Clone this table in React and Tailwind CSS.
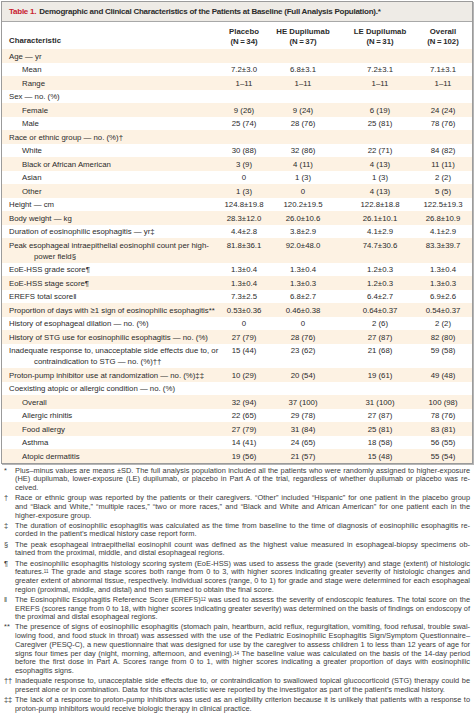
import React from 'react';

const rows = [
  { label: ['Age — yr'] },
  { label: ['Mean'], sub: true, v: ['7.2±3.0', '6.8±3.1', '7.2±3.1', '7.1±3.1'] },
  { label: ['Range'], sub: true, v: ['1–11', '1–11', '1–11', '1–11'] },
  { label: ['Sex — no. (%)'] },
  { label: ['Female'], sub: true, v: ['9 (26)', '9 (24)', '6 (19)', '24 (24)'] },
  { label: ['Male'], sub: true, v: ['25 (74)', '28 (76)', '25 (81)', '78 (76)'] },
  { label: ['Race or ethnic group — no. (%)†'] },
  { label: ['White'], sub: true, v: ['30 (88)', '32 (86)', '22 (71)', '84 (82)'] },
  { label: ['Black or African American'], sub: true, v: ['3 (9)', '4 (11)', '4 (13)', '11 (11)'] },
  { label: ['Asian'], sub: true, v: ['0', '1 (3)', '1 (3)', '2 (2)'] },
  { label: ['Other'], sub: true, v: ['1 (3)', '0', '4 (13)', '5 (5)'] },
  { label: ['Height — cm'], v: ['124.8±19.8', '120.2±19.5', '122.8±18.8', '122.5±19.3'] },
  { label: ['Body weight — kg'], v: ['28.3±12.0', '26.0±10.6', '26.1±10.1', '26.8±10.9'] },
  { label: ['Duration of eosinophilic esophagitis — yr‡'], v: ['4.4±2.8', '3.8±2.9', '4.1±2.9', '4.1±2.9'] },
  {
    label: ['Peak esophageal intraepithelial eosinophil count per high-', 'power field§'],
    v: ['81.8±36.1', '92.0±48.0', '74.7±30.6', '83.3±39.7'],
  },
  { label: ['EoE-HSS grade score¶'], v: ['1.3±0.4', '1.3±0.4', '1.2±0.3', '1.3±0.4'] },
  { label: ['EoE-HSS stage score¶'], v: ['1.3±0.4', '1.3±0.3', '1.2±0.3', '1.3±0.3'] },
  { label: ['EREFS total score‖'], v: ['7.3±2.5', '6.8±2.7', '6.4±2.7', '6.9±2.6'] },
  {
    label: ['Proportion of days with ≥1 sign of eosinophilic esophagitis**'],
    v: ['0.53±0.36', '0.46±0.38', '0.64±0.37', '0.54±0.37'],
  },
  { label: ['History of esophageal dilation — no. (%)'], v: ['0', '0', '2 (6)', '2 (2)'] },
  { label: ['History of STG use for eosinophilic esophagitis — no. (%)'], v: ['27 (79)', '28 (76)', '27 (87)', '82 (80)'] },
  {
    label: ['Inadequate response to, unacceptable side effects due to, or', 'contraindication to STG — no. (%)††'],
    v: ['15 (44)', '23 (62)', '21 (68)', '59 (58)'],
  },
  { label: ['Proton-pump inhibitor use at randomization — no. (%)‡‡'], v: ['10 (29)', '20 (54)', '19 (61)', '49 (48)'] },
  { label: ['Coexisting atopic or allergic condition — no. (%)'] },
  { label: ['Overall'], sub: true, v: ['32 (94)', '37 (100)', '31 (100)', '100 (98)'] },
  { label: ['Allergic rhinitis'], sub: true, v: ['22 (65)', '29 (78)', '27 (87)', '78 (76)'] },
  { label: ['Food allergy'], sub: true, v: ['27 (79)', '31 (84)', '25 (81)', '83 (81)'] },
  { label: ['Asthma'], sub: true, v: ['14 (41)', '24 (65)', '18 (58)', '56 (55)'] },
  { label: ['Atopic dermatitis'], sub: true, v: ['19 (56)', '21 (57)', '15 (48)', '55 (54)'] },
];

const heads = [
  ['Placebo', '(N\u2009=\u200934)'],
  ['HE Dupilumab', '(N\u2009=\u200937)'],
  ['LE Dupilumab', '(N\u2009=\u200931)'],
  ['Overall', '(N\u2009=\u2009102)'],
];

const notes = [
  {
    sym: '*',
    lines: [
      'Plus–minus values are means ±SD. The full analysis population included all the patients who were randomly assigned to higher-exposure',
      '(HE) dupilumab, lower-exposure (LE) dupilumab, or placebo in Part A of the trial, regardless of whether dupilumab or placebo was re-',
      'ceived.',
    ],
  },
  {
    sym: '†',
    lines: [
      'Race or ethnic group was reported by the patients or their caregivers. “Other” included “Hispanic” for one patient in the placebo group',
      'and “Black and White,” “multiple races,” “two or more races,” and “Black and White and African American” for one patient each in the',
      'higher-exposure group.',
    ],
  },
  {
    sym: '‡',
    lines: [
      'The duration of eosinophilic esophagitis was calculated as the time from baseline to the time of diagnosis of eosinophilic esophagitis re-',
      'corded in the patient’s medical history case report form.',
    ],
  },
  {
    sym: '§',
    lines: [
      'The peak esophageal intraepithelial eosinophil count was defined as the highest value measured in esophageal-biopsy specimens ob-',
      'tained from the proximal, middle, and distal esophageal regions.',
    ],
  },
  {
    sym: '¶',
    lines: [
      'The eosinophilic esophagitis histology scoring system (EoE-HSS) was used to assess the grade (severity) and stage (extent) of histologic',
      ['features.', '11', ' The grade and stage scores both range from 0 to 3, with higher scores indicating greater severity of histologic changes and'],
      'greater extent of abnormal tissue, respectively. Individual scores (range, 0 to 1) for grade and stage were determined for each esophageal',
      'region (proximal, middle, and distal) and then summed to obtain the final score.',
    ],
  },
  {
    sym: '‖',
    lines: [
      ['The Eosinophilic Esophagitis Reference Score (EREFS)', '12', ' was used to assess the severity of endoscopic features. The total score on the'],
      'EREFS (scores range from 0 to 18, with higher scores indicating greater severity) was determined on the basis of findings on endoscopy of',
      'the proximal and distal esophageal regions.',
    ],
  },
  {
    sym: '**',
    lines: [
      'The presence of signs of eosinophilic esophagitis (stomach pain, heartburn, acid reflux, regurgitation, vomiting, food refusal, trouble swal-',
      'lowing food, and food stuck in throat) was assessed with the use of the Pediatric Eosinophilic Esophagitis Sign/Symptom Questionnaire–',
      'Caregiver (PESQ-C), a new questionnaire that was designed for use by the caregiver to assess children 1 to less than 12 years of age for',
      ['signs four times per day (night, morning, afternoon, and evening).', '14', ' The baseline value was calculated on the basis of the 14-day period'],
      'before the first dose in Part A. Scores range from 0 to 1, with higher scores indicating a greater proportion of days with eosinophilic',
      'esophagitis signs.',
    ],
  },
  {
    sym: '††',
    lines: [
      'Inadequate response to, unacceptable side effects due to, or contraindication to swallowed topical glucocorticoid (STG) therapy could be',
      'present alone or in combination. Data for this characteristic were reported by the investigator as part of the patient’s medical history.',
    ],
  },
  {
    sym: '‡‡',
    lines: [
      'The lack of a response to proton-pump inhibitors was used as an eligibility criterion because it is unlikely that patients with a response to',
      'proton-pump inhibitors would receive biologic therapy in clinical practice.',
    ],
  },
];

const cols = 'grid grid-cols-[220px_44px_74px_80px_46px]';

function NoteLine({ line, last }) {
  const content = Array.isArray(line) ? (
    <>
      {line[0]}
      <sup className="text-[4.5px] relative -top-[1px]">{line[1]}</sup>
      {line[2]}
    </>
  ) : (
    line
  );
  return (
    <div
      className={
        last
          ? 'whitespace-nowrap'
          : 'whitespace-nowrap text-justify [text-align-last:justify]'
      }
    >
      {content}
    </div>
  );
}

export default function App() {
  return (
    <div className="w-[474px] min-h-[713px] bg-white text-[#2b2b2b] font-['Liberation_Sans',Arial,sans-serif] pt-px overflow-hidden">
      <div className="mx-[1px] border border-[#9b9b9b] shadow-[1px_1px_0_#b5b5b5]">
        {/* title bar */}
        <div className="h-[20px] bg-[#eeebe6] border-b border-[#a8a8a8] px-[7px] flex items-center text-[8px] tracking-[-0.25px] font-bold whitespace-nowrap">
          <span className="text-[#c8202f] mr-[3px]">Table 1.</span>
          <span>Demographic and Clinical Characteristics of the Patients at Baseline (Full Analysis Population).*</span>
        </div>

        {/* header */}
        <div className={`${cols} h-[27px] text-[7.8px] font-bold leading-[10px]`}>
          <div className="pl-[7px] self-end pb-[3px]">Characteristic</div>
          {heads.map((h) => (
            <div key={h[0]} className="text-center pt-[5px] whitespace-nowrap">
              <div>{h[0]}</div>
              <div>{h[1]}</div>
            </div>
          ))}
        </div>

        {/* body */}
        <div className="text-[7.8px]">
          {rows.map((r, i) => (
            <div
              key={r.label[0]}
              className={`${cols} leading-[11px] ${r.label.length > 1 ? 'h-[24.5px]' : 'h-[13.5px]'} pt-[1.5px] ${
                i % 2 === 0 ? 'bg-[#fdf2e3]' : 'bg-white'
              }`}
            >
              <div className={`${r.sub ? 'pl-[20px]' : 'pl-[7px]'} whitespace-nowrap`}>
                <div>{r.label[0]}</div>
                {r.label[1] && <div className="pl-[25px]">{r.label[1]}</div>}
              </div>
              {(r.v || ['', '', '', '']).map((val, j) => (
                <div key={j} className="text-center whitespace-nowrap">
                  {val}
                </div>
              ))}
            </div>
          ))}
        </div>
      </div>

      {/* footnotes */}
      <div className="mt-[3px] px-[4px] text-[7.4px] leading-[8.7px] text-[#3a3a3a] flex flex-col gap-[1.5px]">
        {notes.map((n) => (
          <div key={n.sym} className="flex">
            <div className="w-[11px] shrink-0">{n.sym}</div>
            <div className="w-[455px]">
              {n.lines.map((l, k) => (
                <NoteLine key={k} line={l} last={k === n.lines.length - 1} />
              ))}
            </div>
          </div>
        ))}
      </div>
      <div className="mt-[3px] mx-[1px] border-t border-[#9b9b9b]" />
    </div>
  );
}
